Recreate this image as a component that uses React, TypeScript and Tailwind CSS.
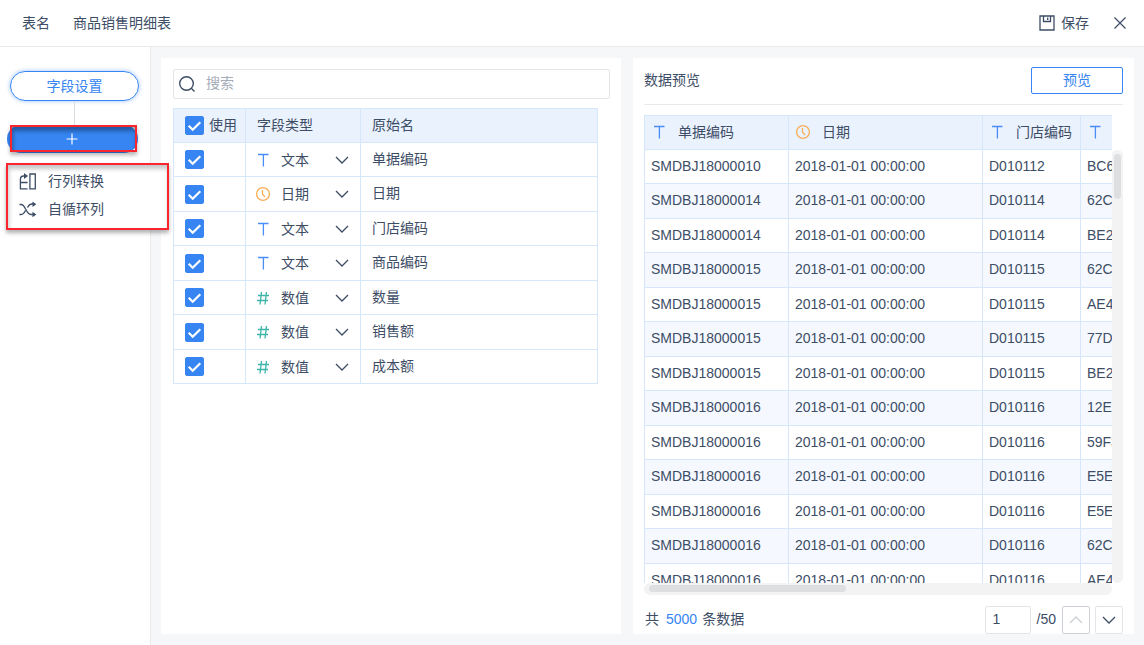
import React from "react";

type FieldType = "text" | "date" | "number";

const typeNames: Record<FieldType, string> = { text: "文本", date: "日期", number: "数值" };

const fields: { type: FieldType; name: string }[] = [
  { type: "text", name: "单据编码" },
  { type: "date", name: "日期" },
  { type: "text", name: "门店编码" },
  { type: "text", name: "商品编码" },
  { type: "number", name: "数量" },
  { type: "number", name: "销售额" },
  { type: "number", name: "成本额" },
];

const day = "2018-01-01 00:00:00";
const rows: string[][] = [
  ["SMDBJ18000010", day, "D010112", "BC6"],
  ["SMDBJ18000014", day, "D010114", "62C"],
  ["SMDBJ18000014", day, "D010114", "BE2"],
  ["SMDBJ18000015", day, "D010115", "62C"],
  ["SMDBJ18000015", day, "D010115", "AE4"],
  ["SMDBJ18000015", day, "D010115", "77D"],
  ["SMDBJ18000015", day, "D010115", "BE2"],
  ["SMDBJ18000016", day, "D010116", "12E"],
  ["SMDBJ18000016", day, "D010116", "59F3"],
  ["SMDBJ18000016", day, "D010116", "E5E"],
  ["SMDBJ18000016", day, "D010116", "E5E"],
  ["SMDBJ18000016", day, "D010116", "62C"],
  ["SMDBJ18000016", day, "D010116", "AE4"],
];

function TypeIcon({ type }: { type: FieldType }) {
  if (type === "date") {
    return (
      <svg viewBox="0 0 16 16" className="size-4 shrink-0 text-[#f9ac55]" fill="none" stroke="currentColor" strokeWidth="1.3">
        <circle cx="8" cy="8" r="6.4" />
        <path d="M7.5 4v4.3l2.6 2.8" />
      </svg>
    );
  }
  if (type === "text") {
    return (
      <svg viewBox="0 0 16 16" className="size-4 shrink-0 text-[#4a8df6]" fill="none" stroke="currentColor" strokeWidth="1.3">
        <path d="M3 2.5h10.5M8.4 2.5V14.5" />
      </svg>
    );
  }
  return (
    <svg viewBox="0 0 16 16" className="size-4 shrink-0 text-[#3db5a8]" fill="none" stroke="currentColor" strokeWidth="1.3">
      <path d="M3 5.5h11M2 10.5h11M6.5 2L5 14.5M11.5 2L10 14.5" />
    </svg>
  );
}

function Chevron({ up = false }: { up?: boolean }) {
  return (
    <svg viewBox="0 0 14 14" className="size-[14px] shrink-0" fill="none" stroke="currentColor" strokeWidth="1.3">
      <path d={up ? "M1 10l6-6 6 6" : "M1 4l6 6 6-6"} />
    </svg>
  );
}

function Tick({ label }: { label: string }) {
  return (
    <span className="relative block size-[19px] shrink-0">
      <input
        type="checkbox"
        defaultChecked
        aria-label={label}
        className="peer block size-[19px] appearance-none rounded-xs border border-[#3685f2] checked:bg-[#3685f2]"
      />
      <svg viewBox="0 0 19 19" className="pointer-events-none absolute inset-0 hidden text-white peer-checked:block" fill="none" stroke="currentColor" strokeWidth="2.2">
        <path d="M3.7 9.8l4 4 7.6-7.6" />
      </svg>
    </span>
  );
}

function Header() {
  return (
    <header className="flex h-[47px] shrink-0 items-center border-b border-[#e8eaed] pr-[17px] pb-px pl-[22px]">
      <span>表名</span>
      <span className="ml-[23px]">商品销售明细表</span>
      <button type="button" className="ml-auto flex items-center gap-[6px]">
        <svg viewBox="0 0 16 16" className="size-4" fill="none" stroke="currentColor" strokeWidth="1.3">
          <path d="M1 1h14v14H1zM4.5 1v5.5h7V1M8.7 2.5v2.5" />
        </svg>
        保存
      </button>
      <button type="button" aria-label="关闭" className="ml-6">
        <svg viewBox="0 0 14 14" className="size-[14px]" fill="none" stroke="currentColor" strokeWidth="1.2">
          <path d="M1.5 1.5l11 11M12.5 1.5l-11 11" />
        </svg>
      </button>
    </header>
  );
}

function Sidebar() {
  return (
    <aside className="relative z-10 w-[151px] shrink-0 border-r border-[#e8eaed] pt-6">
      <div className="flex flex-col items-center pr-[1px]">
        <button type="button" className="h-[30px] w-[129px] rounded-full border border-[#3685f2] text-[#3685f2] shadow-[0_0_4px_rgba(54,133,242,0.5)]">
          字段设置
        </button>
        <span className="h-6 w-px bg-[#d9dce1]" />
      </div>
      <div className="relative ml-[7px] h-7 w-[131px]">
        <button type="button" aria-label="添加" className="flex h-7 w-full items-center justify-center rounded-full bg-[#3685f2] pr-px text-white">
          <svg viewBox="0 0 12 12" className="size-3" fill="none" stroke="currentColor" strokeWidth="1.2">
            <path d="M6 .5v11M.5 6h11" />
          </svg>
        </button>
        <span className="pointer-events-none absolute top-0 left-[3px] h-[27px] w-[127px] border-2 border-[#fb252e] shadow-[inset_1px_4px_4px_rgba(0,0,0,0.35),0_3px_4px_rgba(0,0,0,0.3)]" />
      </div>
      <ul className="absolute top-[116px] left-[6px] w-[163px] border-2 border-[#fb252e] bg-white pt-[2px] pb-[5px] shadow-[inset_1px_4px_4px_rgba(0,0,0,0.22),0_3px_4px_rgba(0,0,0,0.3)]">
        <li>
          <button type="button" className="flex h-7 w-full items-center gap-[11px] pl-[11px]">
            <svg viewBox="0 0 18 18" className="size-[18px]" fill="none" stroke="currentColor" strokeWidth="1.3">
              <path d="M10.9 2h5.4v14.8h-5.4zM8.6 16.8H1.4V7.5q0-3.5 3.2-3.5H7M1.4 10.5h7.2" />
              <path d="M5 1l4 3-4 3z" fill="currentColor" stroke="none" />
            </svg>
            行列转换
          </button>
        </li>
        <li>
          <button type="button" className="flex h-7 w-full items-center gap-[11px] pl-[11px]">
            <svg viewBox="0 0 18 18" className="size-[18px]" fill="none" stroke="currentColor" strokeWidth="1.3">
              <path d="M.5 4.5H2c5 0 4.500 10 10 10h3M.5 14.500H2c2.500 0 3.500-2 4.500-4M8.500 7.500c1-2 2-3.500 4.500-3.500h2" />
              <path d="M13.500 1.500l3.800 2.700-3.800 2.700zM13.500 11.800l3.800 2.700-3.800 2.700z" fill="currentColor" stroke="none" />
            </svg>
            自循环列
          </button>
        </li>
      </ul>
    </aside>
  );
}

function FieldPanel() {
  const line = "border-r border-b border-[#d6e6fb]";
  return (
    <section className="min-w-0 flex-[437] bg-white pt-[11px] pr-[11px] pl-3">
      <label className="flex h-[30px] items-center gap-[10px] rounded-xs border border-[#e2e4e8] px-1">
        <svg viewBox="0 0 18 18" className="size-[18px] shrink-0" fill="none" stroke="currentColor" strokeWidth="1.4">
          <circle cx="8.5" cy="8.5" r="6.8" />
          <path d="M13.3 13.3l3.2 3.2" />
        </svg>
        <input type="text" aria-label="搜索" placeholder="搜索" className="min-w-0 flex-1 pb-[2px] outline-none placeholder:text-[#a5acb8]" />
      </label>
      <div className="mt-[9px] pr-3">
        <table className="w-full table-fixed border-separate border-spacing-0 border-t border-l border-[#d6e6fb] text-left">
          <colgroup>
            <col className="w-[72px]" />
            <col className="w-[115px]" />
            <col />
          </colgroup>
          <thead>
            <tr className="h-[34px] bg-[#eaf2fe]">
              <th className={`${line} p-0 pl-[11px] font-normal`}>
                <span className="flex items-center gap-[5px]">
                  <Tick label="全部使用" />
                  <span className="pb-[2px]">使用</span>
                </span>
              </th>
              <th className={`${line} p-0 pb-[2px] pl-[11px] font-normal`}>字段类型</th>
              <th className={`${line} p-0 pb-[2px] pl-[11px] font-normal`}>原始名</th>
            </tr>
          </thead>
          <tbody>
            {fields.map((f) => (
              <tr key={f.name} className="h-[34px] even:h-[35px]">
                <td className={`${line} p-0 pl-[11px]`}>
                  <Tick label={`使用 ${f.name}`} />
                </td>
                <td className={`${line} p-0`}>
                  <button type="button" className="flex w-full items-center pr-[11px] pl-[9px]">
                    <TypeIcon type={f.type} />
                    <span className="ml-[10px]">{typeNames[f.type]}</span>
                    <span className="ml-auto">
                      <Chevron />
                    </span>
                  </button>
                </td>
                <td className={`${line} p-0 pb-[2px] pl-[11px]`}>{f.name}</td>
              </tr>
            ))}
          </tbody>
        </table>
      </div>
    </section>
  );
}

function PreviewPanel() {
  const line = "border-r border-b border-[#d6e6fb]";
  const heads: { type: FieldType; name: string }[] = [
    { type: "text", name: "单据编码" },
    { type: "date", name: "日期" },
    { type: "text", name: "门店编码" },
    { type: "text", name: "" },
  ];
  return (
    <section className="flex min-w-0 flex-[479] flex-col bg-white px-[11px] pt-[9px]">
      <div className="flex items-start justify-between border-b border-[#e8eaed] pb-[10px]">
        <h2 className="leading-[27px]">数据预览</h2>
        <button type="button" className="h-[27px] w-[92px] rounded-xs border border-[#3685f2] pb-[2px] text-[#3685f2]">
          预览
        </button>
      </div>
      <div className="mt-[10px] flex min-h-0 flex-1">
        <div className="flex min-w-0 flex-1 flex-col">
          <div className="min-h-0 flex-1 overflow-hidden">
            <table className="w-[581px] table-fixed border-separate border-spacing-0 border-t border-l border-[#d6e6fb] text-left">
              <colgroup>
                <col className="w-[144px]" />
                <col className="w-[194px]" />
                <col className="w-[98px]" />
                <col />
              </colgroup>
              <thead>
                <tr className="h-[34px] bg-[#eaf2fe]">
                  {heads.map((h, i) => (
                    <th key={i} className={`${line} p-0 pb-[2px] pl-[6px] font-normal whitespace-nowrap`}>
                      <span className="flex items-center gap-[11px]">
                        <TypeIcon type={h.type} />
                        {h.name}
                      </span>
                    </th>
                  ))}
                </tr>
              </thead>
              <tbody>
                {rows.map((r, i) => (
                  <tr key={i} className="h-[34px] even:h-[35px] even:bg-[#f5f9ff]">
                    {r.map((c, j) => (
                      <td key={j} className={`${line} p-0 pb-[2px] pl-[6px]`}>
                        {c}
                      </td>
                    ))}
                  </tr>
                ))}
              </tbody>
            </table>
          </div>
          <div className="h-3 shrink-0 rounded-md bg-[#f3f3f3] px-[5px] py-[2px]">
            <div className="h-[7px] w-[43%] rounded-full bg-[#dedfe0]" />
          </div>
        </div>
        <div className="mt-[35px] mb-3 w-[11px] shrink-0 rounded-md bg-[#f3f3f3] px-[2px] py-1">
          <div className="h-[45px] w-[7px] rounded-full bg-[#dedfe0]" />
        </div>
      </div>
      <footer className="mt-[11px] flex h-7 shrink-0 items-center pl-px">
        <p className="flex pb-[2px]">
          <span>共</span>
          <span className="mr-[5px] ml-[7px] text-[#3685f2]">5000</span>
          <span>条数据</span>
        </p>
        <input type="text" aria-label="页码" defaultValue="1" className="ml-auto h-7 w-[46px] rounded-xs border border-[#e2e4e8] px-[7px] pb-[2px]" />
        <span className="mx-[6px] pb-[2px]">/50</span>
        <button type="button" aria-label="上一页" className="flex size-7 items-center justify-center rounded-xs border border-[#cdd0d6] text-[#cdd0d6]">
          <Chevron up />
        </button>
        <button type="button" aria-label="下一页" className="ml-[5px] flex size-7 items-center justify-center rounded-xs border border-[#e2e4e8]">
          <Chevron />
        </button>
      </footer>
    </section>
  );
}

export default function App() {
  return (
    <div className="flex h-screen flex-col bg-white font-['Liberation_Sans','Noto_Sans_CJK_SC',sans-serif] text-[14px] leading-5 text-[#3d4d66]">
      <Header />
      <div className="flex min-h-0 flex-1">
        <Sidebar />
        <main className="flex min-w-0 flex-1 gap-3 bg-[#f6f7f9] p-[10px] pt-[11px] pb-[11px]">
          <FieldPanel />
          <PreviewPanel />
        </main>
      </div>
    </div>
  );
}
